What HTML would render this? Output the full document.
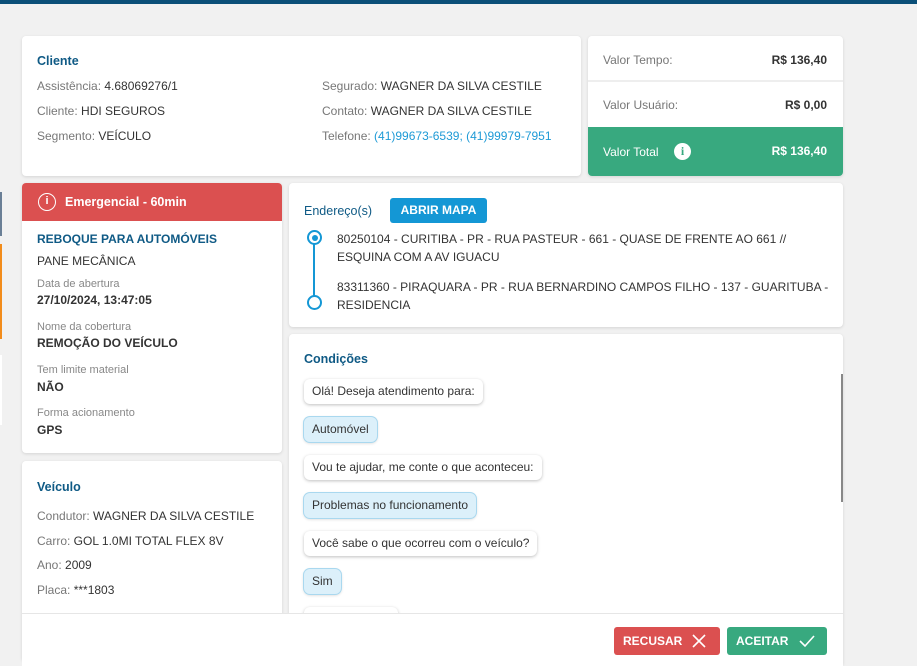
<!DOCTYPE html>
<html><head><meta charset="utf-8"><style>
*{box-sizing:border-box;margin:0;padding:0}
body{width:917px;height:666px;overflow:hidden;background:#f1f1f1;font-family:"Liberation Sans",sans-serif;font-size:12px;letter-spacing:0;color:#333;position:relative}
.abs{position:absolute}
.card{position:absolute;background:#fff;border-radius:4px;box-shadow:0 1px 3px rgba(0,0,0,.12)}
.h{color:#0f5a85;font-weight:bold;font-size:12.5px}
.l{color:#777}
.lbl{color:#888;font-size:11px}
.v{font-weight:bold;color:#333}
.bub{position:absolute;left:15px;background:#fff;border-radius:6px;box-shadow:0 1px 3px rgba(0,0,0,.25);padding:0 8px;height:25px;line-height:25px;color:#333}
.sel{background:#dcf0fa;box-shadow:0 0 0 1px #a9d8ef,0 1px 3px rgba(0,0,0,.2)}
</style></head><body>
<div class="abs" style="left:0;top:0;width:917px;height:4px;background:#0b4f78"></div>
<div class="abs" style="left:0;top:192px;width:2px;height:44px;background:#6a7f96"></div>
<div class="abs" style="left:0;top:244px;width:2px;height:95px;background:#f28c1b"></div>
<div class="abs" style="left:0;top:355px;width:2px;height:70px;background:#fff"></div>

<div class="card" style="left:22px;top:36px;width:559px;height:140px">
 <div class="abs h" style="left:15px;top:18px">Cliente</div>
 <div class="abs" style="left:15px;top:43px"><span class="l">Assistência:</span> 4.68069276/1</div>
 <div class="abs" style="left:15px;top:68px"><span class="l">Cliente:</span> HDI SEGUROS</div>
 <div class="abs" style="left:15px;top:93px"><span class="l">Segmento:</span> VEÍCULO</div>
 <div class="abs" style="left:300px;top:43px"><span class="l">Segurado:</span> WAGNER DA SILVA CESTILE</div>
 <div class="abs" style="left:300px;top:68px"><span class="l">Contato:</span> WAGNER DA SILVA CESTILE</div>
 <div class="abs" style="left:300px;top:93px;white-space:nowrap"><span class="l">Telefone:</span> <span style="color:#1e9ad6">(41)99673-6539; (41)99979-7951</span></div>
</div>

<div class="card" style="left:588px;top:36px;width:255px;height:140px;overflow:hidden">
 <div class="abs l" style="left:15px;top:17px">Valor Tempo:</div>
 <div class="abs v" style="right:16px;top:17px">R$ 136,40</div>
 <div class="abs" style="left:0;top:44px;width:255px;height:2px;background:#eee"></div>
 <div class="abs l" style="left:15px;top:62px">Valor Usuário:</div>
 <div class="abs v" style="right:16px;top:62px">R$ 0,00</div>
 <div class="abs" style="left:0;top:91px;width:255px;height:49px;background:#38a97f;color:#fff">
  <div class="abs" style="left:15px;top:18px">Valor Total</div>
  <div class="abs" style="left:86px;top:16px;width:17px;height:17px;border-radius:50%;background:#fff;color:#38a97f;font-weight:bold;text-align:center;line-height:17px;font-size:12px;font-family:'Liberation Serif',serif">i</div>
  <div class="abs" style="right:16px;top:17px;font-weight:bold">R$ 136,40</div>
 </div>
</div>

<div class="card" style="left:22px;top:183px;width:260px;height:270px;overflow:hidden">
 <div class="abs" style="left:0;top:0;width:260px;height:38px;background:#db5050;color:#fff">
  <div class="abs" style="left:16px;top:10px;width:18px;height:18px;border:1.5px solid #fff;border-radius:50%;text-align:center;line-height:15px;font-size:11px;font-weight:bold">i</div>
  <div class="abs" style="left:43px;top:12px;font-weight:bold;font-size:12.5px">Emergencial - 60min</div>
 </div>
 <div class="abs h" style="left:15px;top:49px;font-weight:bold;font-size:12px">REBOQUE PARA AUTOMÓVEIS</div>
 <div class="abs" style="left:15px;top:71px">PANE MECÂNICA</div>
 <div class="abs lbl" style="left:15px;top:95px">Data de abertura</div>
 <div class="abs v" style="left:15px;top:110px">27/10/2024, 13:47:05</div>
 <div class="abs lbl" style="left:15px;top:138px">Nome da cobertura</div>
 <div class="abs v" style="left:15px;top:153px">REMOÇÃO DO VEÍCULO</div>
 <div class="abs lbl" style="left:15px;top:181px">Tem limite material</div>
 <div class="abs v" style="left:15px;top:197px">NÃO</div>
 <div class="abs lbl" style="left:15px;top:224px">Forma acionamento</div>
 <div class="abs v" style="left:15px;top:240px">GPS</div>
</div>

<div class="card" style="left:22px;top:461px;width:260px;height:200px">
 <div class="abs h" style="left:15px;top:19px">Veículo</div>
 <div class="abs" style="left:15px;top:48px;white-space:nowrap"><span class="l">Condutor:</span> WAGNER DA SILVA CESTILE</div>
 <div class="abs" style="left:15px;top:73px"><span class="l">Carro:</span> GOL 1.0MI TOTAL FLEX 8V</div>
 <div class="abs" style="left:15px;top:97px"><span class="l">Ano:</span> 2009</div>
 <div class="abs" style="left:15px;top:122px"><span class="l">Placa:</span> ***1803</div>
</div>

<div class="card" style="left:289px;top:183px;width:554px;height:144px">
 <div class="abs h" style="left:15px;top:21px;font-weight:normal">Endereço(s)</div>
 <div class="abs" style="left:101px;top:15px;width:97px;height:25px;background:#1497d5;border-radius:3px;color:#fff;font-weight:bold;text-align:center;line-height:25px">ABRIR MAPA</div>
 <div class="abs" style="left:24px;top:58px;width:2px;height:60px;background:#1497d5"></div>
 <div class="abs" style="left:18px;top:47px;width:15px;height:15px;border:2px solid #1497d5;border-radius:50%;background:#fff"><div style="margin:2.5px;width:6px;height:6px;border-radius:50%;background:#1497d5"></div></div>
 <div class="abs" style="left:18px;top:112px;width:15px;height:15px;border:2px solid #1497d5;border-radius:50%;background:#fff"></div>
 <div class="abs" style="left:48px;top:47px;width:470px;line-height:18px">80250104 - CURITIBA - PR - RUA PASTEUR - 661 - QUASE DE FRENTE AO 661 // ESQUINA COM A AV IGUACU</div>
 <div class="abs" style="left:48px;top:95px;width:495px;line-height:18px">83311360 - PIRAQUARA - PR - RUA BERNARDINO CAMPOS FILHO - 137 - GUARITUBA - RESIDENCIA</div>
</div>

<div class="card" style="left:289px;top:334px;width:554px;height:332px;overflow:hidden">
 <div class="abs h" style="left:15px;top:18px">Condições</div>
 <div class="bub" style="top:45px">Olá! Deseja atendimento para:</div>
 <div class="bub sel" style="top:83px">Automóvel</div>
 <div class="bub" style="top:121px">Vou te ajudar, me conte o que aconteceu:</div>
 <div class="bub sel" style="top:159px">Problemas no funcionamento</div>
 <div class="bub" style="top:197px">Você sabe o que ocorreu com o veículo?</div>
 <div class="bub sel" style="top:235px">Sim</div>
 <div class="bub" style="top:273px;width:94px"></div>
 <div class="abs" style="left:552px;top:40px;width:2px;height:128px;background:#888"></div>
</div>

<div class="abs" style="left:22px;top:613px;width:821px;height:53px;background:#fff;border-top:1px solid #e6e6e6">
 <div class="abs" style="left:592px;top:13px;width:106px;height:28px;background:#db5050;border-radius:3px;color:#fff;font-weight:bold;line-height:28px;padding-left:9px">RECUSAR
  <svg class="abs" style="left:78px;top:7px" width="14" height="14" viewBox="0 0 14 14"><path d="M1 1L13 13M13 1L1 13" stroke="#fff" stroke-width="1.6"/></svg></div>
 <div class="abs" style="left:705px;top:13px;width:100px;height:28px;background:#38a97f;border-radius:3px;color:#fff;font-weight:bold;line-height:28px;padding-left:9px">ACEITAR
  <svg class="abs" style="left:72px;top:7px" width="16" height="14" viewBox="0 0 16 14"><path d="M1 7L6 12L15 2" stroke="#fff" stroke-width="1.6" fill="none"/></svg></div>
</div>
</body></html>
